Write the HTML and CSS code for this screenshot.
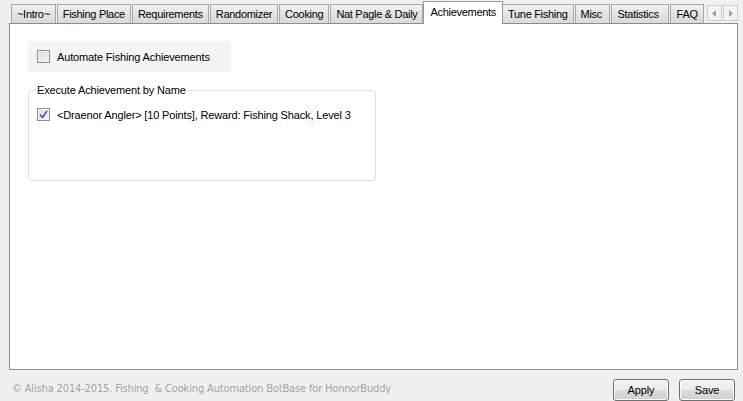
FILE: index.html
```html
<!DOCTYPE html>
<html>
<head>
<meta charset="utf-8">
<link rel="stylesheet" href="styles.css">
</head>
<body>
<div class="window">
  <div class="tabstrip">
    <div class="tabs">
      <div class="tab">~Intro~</div>
      <div class="tab">Fishing Place</div>
      <div class="tab">Requirements</div>
      <div class="tab">Randomizer</div>
      <div class="tab">Cooking</div>
      <div class="tab">Nat Pagle &amp; Daily</div>
      <div class="tab active">Achievements</div>
      <div class="tab">Tune Fishing</div>
      <div class="tab tab-misc">Misc</div>
      <div class="tab tab-stats">Statistics</div>
      <div class="tab tab-faq">FAQ</div>
    </div>
    <div class="scroller">
      <div class="arrow"><svg width="5" height="7" viewBox="0 0 5 7"><path d="M4 0 L0 3.5 L4 7 Z" fill="#a0a0a0"/></svg></div>
      <div class="arrow"><svg width="5" height="7" viewBox="0 0 5 7"><path d="M1 0 L5 3.5 L1 7 Z" fill="#a0a0a0"/></svg></div>
    </div>
  </div>
  <div class="panel">
    <div class="autobox">
      <span class="check"></span>
      <span class="label">Automate Fishing Achievements</span>
    </div>
    <fieldset class="group">
      <legend class="legend">Execute Achievement by Name</legend>
      <div class="row">
        <span class="check checked"><svg width="9" height="9" viewBox="0 0 9 9"><path d="M1 4.5 L3.5 7.5 L8 1" fill="none" stroke="#4a56b8" stroke-width="1.6"/></svg></span>
        <span class="label">&lt;Draenor Angler&gt; [10 Points], Reward: Fishing Shack, Level 3</span>
      </div>
    </fieldset>
  </div>
  <div class="footer">
    <div class="copyright">© Alisha 2014-2015. Fishing&nbsp; &amp; Cooking Automation BotBase for HonnorBuddy</div>
    <div class="buttons">
      <div class="btn">Apply</div>
      <div class="btn">Save</div>
    </div>
  </div>
</div>
</body>
</html>
```
FILE: styles.css
```css
html, body {
  margin: 0;
  padding: 0;
  background: #f0f0f0;
}
body {
  font-family: "Liberation Sans", Arial, sans-serif;
  font-size: 11px;
  color: #000;
  width: 743px;
  height: 401px;
  overflow: hidden;
}
.window {
  display: flex;
  flex-direction: column;
  height: 401px;
}
.tabstrip {
  display: flex;
  align-items: flex-end;
  height: 24px;
  padding-left: 11px;
  position: relative;
  z-index: 2;
}
.tabs {
  display: flex;
  align-items: flex-end;
}
.tab {
  height: 18px;
  line-height: 19px;
  padding: 0 5px;
  border: 1px solid #a7a7a7;
  border-bottom: none;
  margin-right: 1px;
  background: linear-gradient(#f2f2f2, #e3e3e3 50%, #dadada);
  white-space: nowrap;
  font-size: 11px;
  letter-spacing: -0.3px;
}
.tab-misc {
  box-sizing: border-box;
  min-width: 35px;
  height: 19px;
}
.tab-stats {
  box-sizing: border-box;
  min-width: 58px;
  height: 19px;
  padding-left: 6px;
}
.tab-faq {
  box-sizing: border-box;
  min-width: 34px;
  height: 19px;
  padding-left: 6px;
}
.tab.active {
  height: 22px;
  line-height: 20px;
  background: #fff;
  margin-bottom: -1px;
  margin-left: -1px;
  margin-right: -1px;
  padding: 0 6px;
  border-color: #9a9a9a;
  position: relative;
  z-index: 3;
}
.scroller {
  display: flex;
  align-self: flex-start;
  margin-top: 5px;
  margin-left: 2px;
  gap: 1px;
}
.arrow {
  width: 13px;
  height: 14px;
  border: 1px solid #d0d0d0;
  background: #f4f4f4;
  display: flex;
  align-items: center;
  justify-content: center;
}
.panel {
  margin: 0 5px 0 9px;
  height: 341px;
  border: 1px solid #898c95;
  border-right-color: #8d8d8d;
  border-bottom-color: #8d8d8d;
  background: #fff;
  padding: 17px 18px 0 18px;
  position: relative;
  z-index: 1;
}
.autobox {
  width: 203px;
  height: 31px;
  background: #f4f4f4;
  display: flex;
  align-items: center;
  padding-left: 9px;
  box-sizing: border-box;
}
.check {
  width: 11px;
  height: 11px;
  border: 1px solid #8e8f8f;
  background: linear-gradient(135deg, #dcdcdc, #f6f6f6);
  box-shadow: inset 0 0 0 1px #f4f4f4;
  display: inline-flex;
  align-items: center;
  justify-content: center;
  flex: none;
}
.label {
  margin-left: 7px;
  font-size: 11px;
  letter-spacing: -0.15px;
  white-space: nowrap;
}
.group {
  margin: 12px 0 0 0;
  width: 348px;
  height: 97px;
  box-sizing: border-box;
  border: 1px solid #d5dfe5;
  border-radius: 4px;
  padding: 12px 8px 0 8px;
}
.legend {
  padding: 0 2px 0 1px;
  margin-left: -1px;
  font-size: 11px;
  letter-spacing: -0.15px;
}
.row {
  display: flex;
  align-items: center;
}
.footer {
  display: flex;
  align-items: flex-start;
  justify-content: space-between;
  flex: 1;
  padding: 0 8px 0 12px;
}
.copyright {
  font-family: "DejaVu Sans Condensed", "DejaVu Sans", sans-serif;
  font-stretch: condensed;
  font-size: 11px;
  line-height: 14px;
  margin-top: 12px;
  color: #a3a3a3;
  white-space: nowrap;
  letter-spacing: -0.15px;
}
.buttons {
  display: flex;
  gap: 10px;
  padding-top: 9px;
}
.btn {
  width: 54px;
  height: 20px;
  line-height: 20px;
  text-align: center;
  border: 1px solid #707070;
  border-radius: 3px;
  background: linear-gradient(#f2f2f2, #ebebeb 50%, #dddddd 51%, #cfcfcf);
  font-size: 11px;
  letter-spacing: -0.15px;
  box-shadow: inset 0 0 0 1px #fcfcfc;
}
```
